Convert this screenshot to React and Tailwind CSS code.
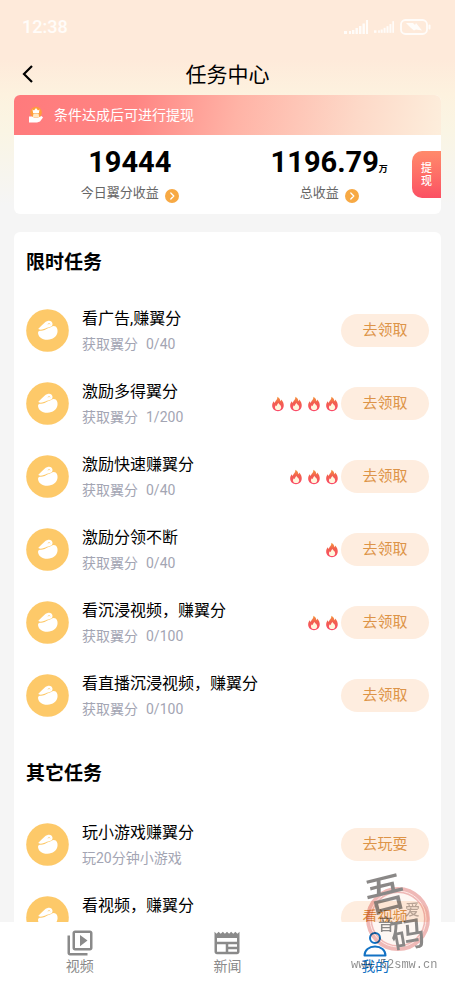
import { MdNewspaper, MdOutlineVideoLibrary } from 'react-icons/md';

const limitedTasks = [
    { title: '看广告,赚翼分', desc: '获取翼分', progress: '0/40', fires: 0, action: '去领取' },
    { title: '激励多得翼分', desc: '获取翼分', progress: '1/200', fires: 4, action: '去领取' },
    { title: '激励快速赚翼分', desc: '获取翼分', progress: '0/40', fires: 3, action: '去领取' },
    { title: '激励分领不断', desc: '获取翼分', progress: '0/40', fires: 1, action: '去领取' },
    { title: '看沉浸视频，赚翼分', desc: '获取翼分', progress: '0/100', fires: 2, action: '去领取' },
    { title: '看直播沉浸视频，赚翼分', desc: '获取翼分', progress: '0/100', fires: 0, action: '去领取' },
];

const otherTasks = [
    { title: '玩小游戏赚翼分', desc: '玩20分钟小游戏', fires: 0, action: '去玩耍' },
    { title: '看视频，赚翼分', fires: 0, action: '看视频' },
];

function SignalIcon({ className }) {
    return (
        <svg viewBox="0 0 24 14" className={className} fill="currentColor" aria-hidden="true">
            <rect x="0" y="11" width="3" height="3" />
            <rect x="5" y="11" width="2" height="3" />
            <rect x="8" y="10" width="2.4" height="4" />
            <rect x="11.5" y="8" width="2.4" height="6" />
            <rect x="15" y="6" width="2.4" height="8" />
            <rect x="18.5" y="3.5" width="2.4" height="10.5" />
            <rect x="22" y="0" width="2" height="14" />
        </svg>
    );
}

function BatteryIcon() {
    return (
        <svg viewBox="0 0 31 16" className="h-4 w-[31px]" aria-hidden="true">
            <rect x="1" y="1" width="26" height="14" rx="4.5" fill="none" stroke="currentColor" strokeWidth="1.8" />
            <path d="M6 4h7l2 2 1-2 6 7.5-6-1-2 1-3-2.5z" fill="currentColor" />
            <rect x="28.5" y="5.5" width="2" height="5" rx="1" fill="currentColor" />
        </svg>
    );
}

function RewardIcon() {
    return (
        <svg viewBox="0 0 16 18" className="h-[18px] w-4" aria-hidden="true">
            <circle cx="8" cy="6.5" r="5.8" fill="#ff9d3c" />
            <path d="M4.5 3.5 6 4.5 8 2l2 2.5 1.5-1-.6 3.5H5.1z" fill="#fff" />
            <path d="M5.5 7.5h5l.8 4H4.7z" fill="#ffe9c4" />
            <path d="M1 10.500h3l2 1.300h4l3.500-1.800 1.500 1.500-3 4-3 1H1z" fill="#fff" />
        </svg>
    );
}

function ArrowDot() {
    return (
        <svg viewBox="0 0 14 14" className="mt-1.5 size-3.5" aria-hidden="true">
            <circle cx="7" cy="7" r="7" fill="#f7a944" />
            <path d="m5.8 4 3 3-3 3" fill="none" stroke="#fff" strokeWidth="1.3" strokeLinecap="round" strokeLinejoin="round" />
        </svg>
    );
}

function BeanIcon() {
    return (
        <svg viewBox="0 0 43 43" className="size-[43px] shrink-0" aria-hidden="true">
            <circle cx="21.5" cy="21.5" r="21.3" fill="#fdc969" />
            <path
                d="M12.600 19.600c2.300-2.400 4.200-4.600 6.500-6.400 2-1.500 4.800-2 6.300-.7 1.500 1.300 1.500 3.600.2 4.700-1.500 1-3 .8-4.700 1.600-2.200 1.100-4.700 2.100-7.500 1.800-.9-.1-1.300-.5-.8-1z"
                fill="#fff"
            />
            <path
                d="M12.100 23c.5-1.400 2.500-1.100 4.600-1.500 3-.6 4.500-2.400 6.900-2.800 1.500-.2 2.400-1.700 4.200-1.600 3 .2 4.100 3.100 3.700 6-.7 4.600-4.700 7.600-10 7.700-5.600.1-10-3.300-9.400-7.800z"
                fill="#fff"
            />
            <path d="M21.800 15.200c.9-.9 1.900-.8 2.400 0" fill="none" stroke="#fdc969" strokeWidth="0.8" />
        </svg>
    );
}

function FireIcon() {
    return (
        <svg viewBox="0 0 14 17" className="h-4 w-3.5" aria-hidden="true">
            <defs>
                <linearGradient id="fire" x1="0" y1="0" x2="0" y2="1">
                    <stop offset="0" stopColor="#f59a3c" />
                    <stop offset="0.4" stopColor="#f2604e" />
                    <stop offset="1" stopColor="#fb4a6a" />
                </linearGradient>
            </defs>
            <path
                d="M6.300.8c2.300 1.200 3.200 2.900 3.200 4.700.6-.4.9-1.100.9-1.900 1.900 1.900 2.900 4.300 2.700 6.800-.3 3.400-2.800 5.800-6.100 5.800S1 13.900.8 10.700C.7 8.500 1.500 7 2.500 5.600c.2 1 .6 1.500 1.200 1.900C3.800 5 6.700 4 6.300.8z"
                fill="url(#fire)"
            />
            <path
                d="M7.300 7.300c.2 1.300 3.200 2.500 3.100 4.900-.1 1.700-1.500 2.800-3.300 2.800s-3.300-1.100-3.400-2.800c0-1.100.5-1.900 1.100-2.500.2.500.5.800.9.900.1-1.300 1.300-1.900 1.600-3.300z"
                fill="#fff6dc"
            />
        </svg>
    );
}

function UserIcon() {
    return (
        <svg viewBox="0 0 24 28" className="h-7 w-6" fill="none" stroke="currentColor" strokeWidth="2" aria-hidden="true">
            <circle cx="12" cy="8" r="5" />
            <path d="M1.500 25.500c0-5.500 4.500-9 10.500-9s10.500 3.500 10.500 9z" strokeLinejoin="round" />
        </svg>
    );
}

function TaskRow({ task }) {
    return (
        <li className="flex h-[73px] items-center">
            <BeanIcon />
            <div className="ml-[13px] min-w-0 flex-1">
                <h3 className="pt-0.5 text-base leading-6 text-black">{task.title}</h3>
                <p className="flex h-[26px] items-center gap-2 text-sm leading-6 text-[#a3a5b3]">
                    <span>{task.desc}</span>
                    {task.progress && <span>{task.progress}</span>}
                </p>
            </div>
            <div className="flex items-center gap-1 pr-0.5">
                {Array.from({ length: task.fires }, (_, i) => (
                    <FireIcon key={i} />
                ))}
            </div>
            <button type="button" className="h-[33px] w-[88px] shrink-0 rounded-full bg-[#feeddf] text-[15px] text-[#dd9448]">
                {task.action}
            </button>
        </li>
    );
}

function Watermark() {
    return (
        <div className="pointer-events-none fixed right-4 bottom-2.5 w-[88px] opacity-60 mix-blend-multiply">
            <svg viewBox="0 0 88 92" className="block w-full overflow-visible" aria-hidden="true">
                <circle cx="47" cy="52" r="29" fill="#fbeee6" fillOpacity="0.8" stroke="#e58a86" strokeWidth="6" />
                <circle cx="47" cy="52" r="28" fill="none" stroke="#fbd9d4" strokeWidth="1" />
                <g fill="#3c3836" fontFamily="'Noto Sans CJK SC', sans-serif" fontWeight="500">
                    <text x="14" y="42" fontSize="40" transform="rotate(-14 34 26)">吾</text>
                    <text x="54" y="48" fontSize="15" fill="#8a7a72">爱</text>
                    <text x="27" y="63" fontSize="16">音</text>
                    <text x="40" y="80" fontSize="34" transform="rotate(-10 57 68)">码</text>
                </g>
            </svg>
            <p className="font-['Liberation_Mono',monospace] text-xs leading-3 text-[#444]">www.52smw.cn</p>
        </div>
    );
}

export default function App() {
    return (
        <div className="flex h-screen flex-col overflow-hidden bg-[#f5f5f5] font-[Roboto,'Noto_Sans_CJK_SC',sans-serif]">
            <div className="min-h-0 flex-1 overflow-y-auto bg-[linear-gradient(#feeada_0,#feeada_60px,#fdf2df_95px,#faf5e4_130px,#f5f5f5_205px)] [scrollbar-width:none]">
                <div className="flex h-[53px] items-center justify-between pr-6 pl-[22px] text-white/85">
                    <span className="text-lg font-medium">12:38</span>
                    <div className="flex items-center gap-1.5">
                        <SignalIcon className="h-3.5 w-6" />
                        <SignalIcon className="h-3.5 w-5" />
                        <BatteryIcon />
                    </div>
                </div>

                <header className="grid h-[42px] grid-cols-[40px_1fr_40px] items-center">
                    <button type="button" aria-label="返回" className="flex justify-end pr-1.5">
                        <svg viewBox="0 0 12 18" className="h-[18px] w-3" fill="none" stroke="#000" strokeWidth="2.2" aria-hidden="true">
                            <path d="m10 1-8 8 8 8" />
                        </svg>
                    </button>
                    <h1 className="pt-0.5 text-center text-[21px] leading-7 text-black">任务中心</h1>
                </header>

                <section className="mx-3.5 overflow-hidden rounded-md bg-white">
                    <div className="flex h-10 items-center gap-2.5 bg-[linear-gradient(100deg,#ff7a7c_0%,#ff8583_28%,#ffb3a6_52%,#fdd9c8_80%,#fdeedc_100%)] pl-3.5 text-sm text-white">
                        <RewardIcon />
                        <p>条件达成后可进行提现</p>
                    </div>
                    <div className="relative grid h-[79px] grid-cols-2 pt-[11px] pr-3 pl-4 text-center">
                        <div>
                            <p className="text-[29px] leading-8 font-bold text-black">19444</p>
                            <a href="#today" className="mt-[3px] flex items-center justify-center gap-1.5 text-[13px] leading-6 text-[#666]">
                                今日翼分收益
                                <ArrowDot />
                            </a>
                        </div>
                        <div>
                            <p className="flex items-baseline justify-center text-[29px] leading-8 font-bold text-black">
                                1196.79
                                <span className="text-[9px] leading-none">万</span>
                            </p>
                            <a href="#total" className="mt-[3px] flex items-center justify-center gap-1.5 text-[13px] leading-6 text-[#666]">
                                总收益
                                <ArrowDot />
                            </a>
                        </div>
                        <button
                            type="button"
                            className="absolute top-4 right-0 flex h-[47px] w-[29px] flex-col items-center justify-center rounded-l-[10px] bg-gradient-to-b from-[#ff8a6b] to-[#fb4f63] text-[11px] leading-[13px] font-medium text-white"
                        >
                            <span>提</span>
                            <span>现</span>
                        </button>
                    </div>
                </section>

                <section className="mx-3.5 mt-[18px] rounded-md bg-white px-3 pt-[17px]">
                    <h2 className="mb-[17px] text-[19px] leading-7 font-bold text-black">限时任务</h2>
                    <ul>
                        {limitedTasks.map((task) => (
                            <TaskRow key={task.title} task={task} />
                        ))}
                    </ul>
                    <h2 className="mt-7 mb-5 text-[19px] leading-7 font-bold text-black">其它任务</h2>
                    <ul>
                        {otherTasks.map((task) => (
                            <TaskRow key={task.title} task={task} />
                        ))}
                    </ul>
                </section>
            </div>

            <nav className="grid h-[59px] shrink-0 grid-cols-3 bg-white px-1.5 text-sm leading-4 text-[#8a8a8a]">
                <a href="#video" className="flex flex-col items-center pt-1.5">
                    <MdOutlineVideoLibrary className="size-[30px]" />
                    <span>视频</span>
                </a>
                <a href="#news" className="flex flex-col items-center pt-1.5">
                    <MdNewspaper className="size-[30px]" />
                    <span>新闻</span>
                </a>
                <a href="#mine" className="flex flex-col items-center pt-2 text-[#1272c4]">
                    <UserIcon />
                    <span>我的</span>
                </a>
            </nav>

            <Watermark />
        </div>
    );
}
